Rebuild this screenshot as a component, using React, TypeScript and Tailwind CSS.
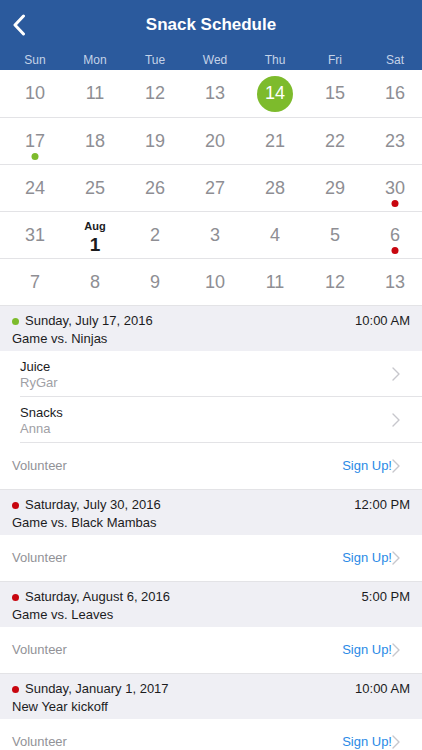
import React from 'react';

const DAYS = ['Sun', 'Mon', 'Tue', 'Wed', 'Thu', 'Fri', 'Sat'];

type Cell = { n: string; month?: string; selected?: boolean; dot?: 'green' | 'red' };

const WEEKS: Cell[][] = [
  [{ n: '10' }, { n: '11' }, { n: '12' }, { n: '13' }, { n: '14', selected: true }, { n: '15' }, { n: '16' }],
  [{ n: '17', dot: 'green' }, { n: '18' }, { n: '19' }, { n: '20' }, { n: '21' }, { n: '22' }, { n: '23' }],
  [{ n: '24' }, { n: '25' }, { n: '26' }, { n: '27' }, { n: '28' }, { n: '29' }, { n: '30', dot: 'red' }],
  [{ n: '31' }, { n: '1', month: 'Aug' }, { n: '2' }, { n: '3' }, { n: '4' }, { n: '5' }, { n: '6', dot: 'red' }],
  [{ n: '7' }, { n: '8' }, { n: '9' }, { n: '10' }, { n: '11' }, { n: '12' }, { n: '13' }],
];

interface EventItem {
  date: string;
  time: string;
  title: string;
  dot: 'green' | 'red';
  slots?: { item: string; who: string }[];
}

const EVENTS: EventItem[] = [
  {
    date: 'Sunday, July 17, 2016',
    time: '10:00 AM',
    title: 'Game vs. Ninjas',
    dot: 'green',
    slots: [
      { item: 'Juice', who: 'RyGar' },
      { item: 'Snacks', who: 'Anna' },
    ],
  },
  { date: 'Saturday, July 30, 2016', time: '12:00 PM', title: 'Game vs. Black Mambas', dot: 'red' },
  { date: 'Saturday, August 6, 2016', time: '5:00 PM', title: 'Game vs. Leaves', dot: 'red' },
  { date: 'Sunday, January 1, 2017', time: '10:00 AM', title: 'New Year kickoff', dot: 'red' },
];

function Chevron({ className = '' }: { className?: string }) {
  return (
    <svg width="8" height="14" viewBox="0 0 8 14" className={className} fill="none">
      <path d="M1 1l6 6-6 6" stroke="#c7c7cc" strokeWidth="1.4" strokeLinecap="round" strokeLinejoin="round" />
    </svg>
  );
}

function DayCell({ cell }: { cell: Cell }) {
  if (cell.month) {
    return (
      <div className="flex flex-col items-center justify-center h-full leading-none text-[#1c1c1e]">
        <span className="text-[11px] font-bold mt-[4px]">{cell.month}</span>
        <span className="text-[19px] font-bold mt-[3px]">{cell.n}</span>
      </div>
    );
  }
  return (
    <div className="relative flex items-center justify-center h-full">
      {cell.selected ? (
        <div className="w-[36px] h-[36px] rounded-full bg-[#7dbb2c] flex items-center justify-center text-white text-[18px]">
          {cell.n}
        </div>
      ) : (
        <span className="text-[18px] text-[#8e8e93]">{cell.n}</span>
      )}
      {cell.dot && (
        <span
          className={`absolute left-1/2 -translate-x-1/2 bottom-[4px] w-[7px] h-[7px] rounded-full ${
            cell.dot === 'green' ? 'bg-[#7dbb2c]' : 'bg-[#c8060f]'
          }`}
        />
      )}
    </div>
  );
}

export default function App() {
  return (
    <div className="w-[422px] h-[750px] overflow-hidden bg-white" style={{ fontFamily: '"Liberation Sans", Arial, sans-serif' }}>
      <div className="bg-[#2b5a9d] h-[70px] flex flex-col">
        <div className="relative h-[50px] flex items-center justify-center">
          <svg className="absolute left-[12px] top-[14px]" width="14" height="22" viewBox="0 0 14 22" fill="none">
            <path d="M11.5 2L3 11l8.5 9" stroke="white" strokeWidth="3" strokeLinecap="round" strokeLinejoin="round" />
          </svg>
          <span className="text-white text-[17px] font-bold">Snack Schedule</span>
        </div>
        <div className="grid grid-cols-[repeat(7,60px)] pl-[5px] h-[20px] items-center">
          {DAYS.map((d) => (
            <span key={d} className="text-center text-[12px] text-[#c5d3e8]">
              {d}
            </span>
          ))}
        </div>
      </div>

      <div>
        {WEEKS.map((week, i) => (
          <div key={i} className={`h-[47px] ${i > 0 ? 'border-t border-[#e3e3e6]' : ''}`}>
            <div className="grid grid-cols-[repeat(7,60px)] pl-[5px] h-full">
              {week.map((c, j) => (
                <DayCell key={j} cell={c} />
              ))}
            </div>
          </div>
        ))}
      </div>

      <div>
        {EVENTS.map((ev, i) => (
          <div key={i}>
            <div className="bg-[#efeff4] h-[46px] px-[12px] pt-[7px] text-[13px] text-[#1c1c1e] border-t border-[#e3e3e6]">
              <div className="flex items-center justify-between leading-[16px]">
                <div className="flex items-center">
                  <span className={`w-[7px] h-[7px] rounded-full mr-[6px] ${ev.dot === 'green' ? 'bg-[#7dbb2c]' : 'bg-[#c8060f]'}`} />
                  <span>{ev.date}</span>
                </div>
                <span>{ev.time}</span>
              </div>
              <div className="leading-[16px] mt-[2px]">{ev.title}</div>
            </div>
            {ev.slots?.map((s) => (
              <div key={s.item} className="pl-[20px]">
                <div className="h-[46px] flex items-center justify-between pr-[22px] border-b border-[#e3e3e6]">
                  <div className="flex flex-col leading-[16px] mt-[3px]">
                    <span className="text-[13px] text-[#1c1c1e]">{s.item}</span>
                    <span className="text-[13px] text-[#a0a0a5]">{s.who}</span>
                  </div>
                  <Chevron />
                </div>
              </div>
            ))}
            <div className="h-[46px] flex items-center justify-between pl-[12px] pr-[22px]">
              <span className="text-[13px] text-[#929297]">Volunteer</span>
              <div className="flex items-center">
                <span className="text-[13px] text-[#2a8ae6]">Sign Up!</span>
                <Chevron />
              </div>
            </div>
          </div>
        ))}
      </div>
    </div>
  );
}
